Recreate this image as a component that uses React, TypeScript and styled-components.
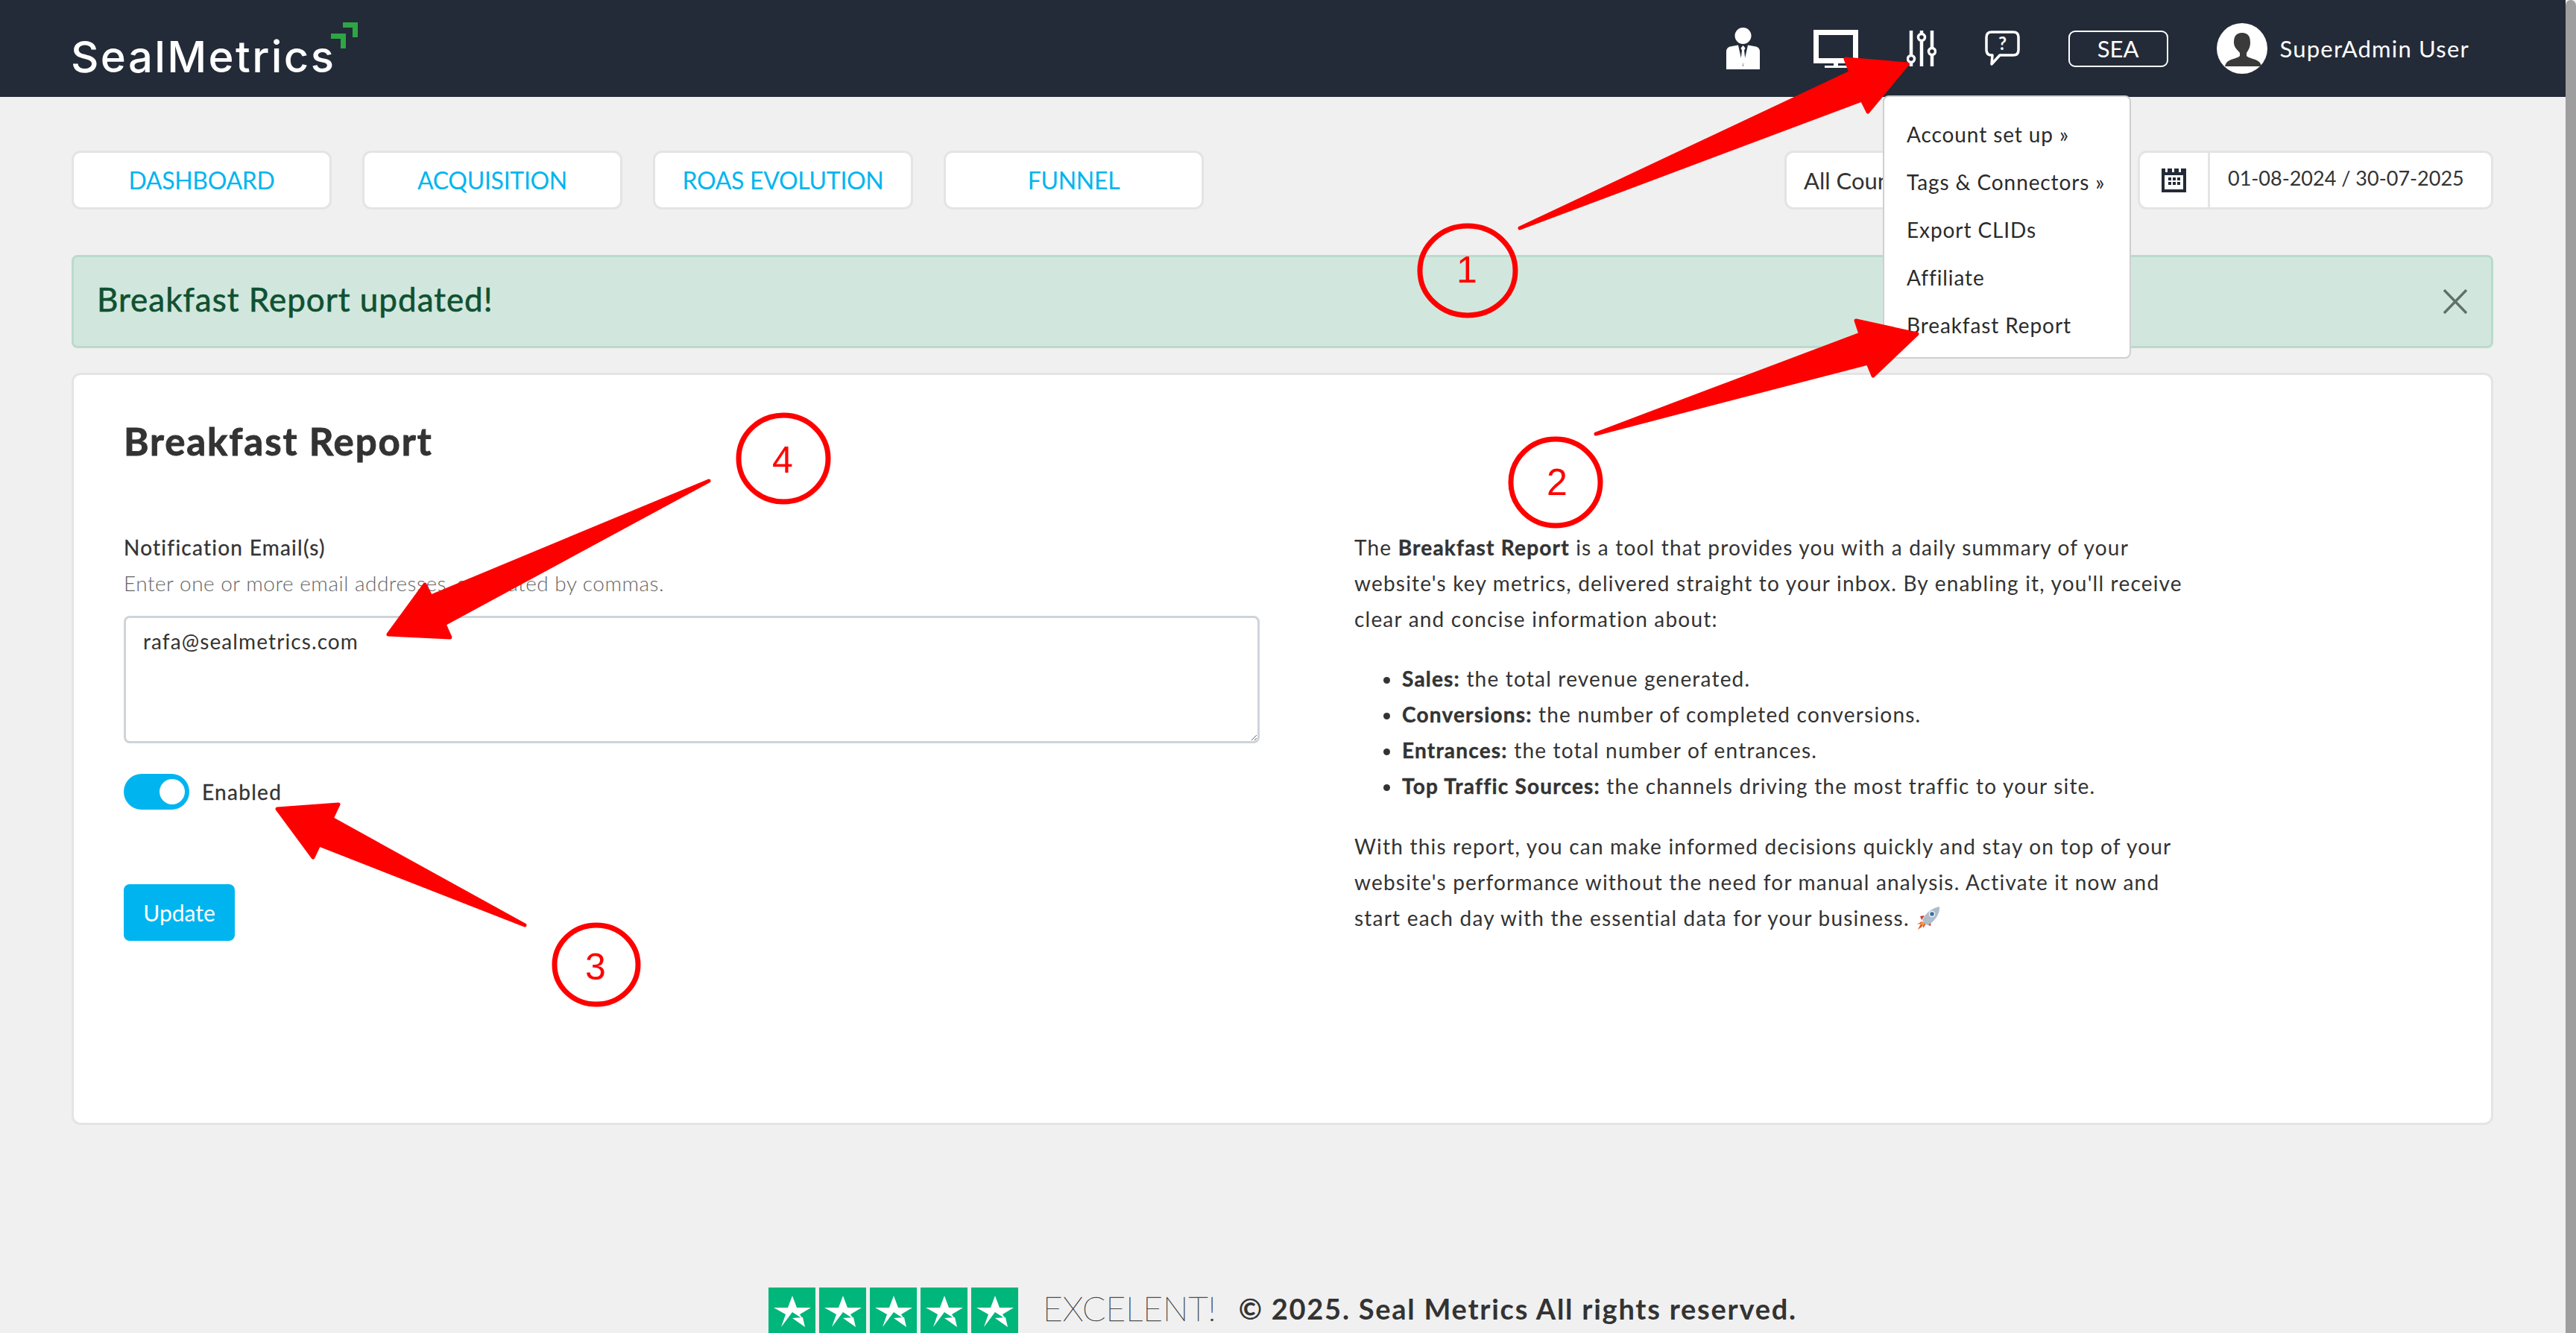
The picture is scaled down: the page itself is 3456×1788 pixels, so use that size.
import styled, { createGlobalStyle } from 'styled-components'

const CYAN = '#00b5ef'
const NAVY = '#232b38'
const TEXT = '#333333'
const LINE = '#e4e4e4'

const GlobalStyle = createGlobalStyle`
  html, body { margin: 0; padding: 0; background: #f0f0f0; overflow: hidden; }
  * { box-sizing: border-box; }
  body { font-family: 'Lato', 'Noto Sans', sans-serif; color: ${TEXT}; }
`

const TABS = ['DASHBOARD', 'ACQUISITION', 'ROAS EVOLUTION', 'FUNNEL']
const MENU = ['Account set up »', 'Tags & Connectors »', 'Export CLIDs', 'Affiliate', 'Breakfast Report']

function SuitIcon() {
  return (
    <SuitSvg width="45" height="56" viewBox="0 0 45 56">
      <circle cx="22.5" cy="11" r="11" fill="#fff" />
      <path d="M0 56V32q0-5 5-6.500l11-2 6.500 29 6.500-29 11 2q5 1.500 5 6.500v24z" fill="#fff" />
      <path d="M22.500 24l3 3.500-1.500 3 1.500 13-3 7-3-7 1.500-13-1.500-3z" fill="#fff" />
    </SuitSvg>
  )
}

function MonitorIcon() {
  return (
    <svg width="60" height="51" viewBox="0 0 60 51">
      <rect x="3.500" y="3.500" width="53" height="38" fill="none" stroke="#fff" strokeWidth="7" />
      <rect x="27" y="45" width="6" height="3" fill="#fff" />
      <rect x="15" y="48" width="30" height="3" fill="#fff" />
    </svg>
  )
}

function SlidersIcon() {
  return (
    <svg width="40" height="48" viewBox="0 0 40 48" fill={NAVY} stroke="#fff">
      <path d="M6 0v48M20 0v48M34 0v48" strokeWidth="4.500" strokeLinecap="round" />
      <circle cx="6" cy="38" r="4.500" strokeWidth="3.500" />
      <circle cx="20" cy="9" r="4.500" strokeWidth="3.500" />
      <circle cx="34" cy="28" r="4.500" strokeWidth="3.500" />
    </svg>
  )
}

function ChatIcon() {
  return (
    <svg width="47" height="48" viewBox="0 0 47 48">
      <path
        d="M9 2h29q7 0 7 7v17q0 7-7 7H20L9 45l1-12H9q-7 0-7-7V9q0-7 7-7z"
        fill="none"
        stroke="#fff"
        strokeWidth="3.500"
        strokeLinejoin="round"
      />
      <text x="23.500" y="26" textAnchor="middle" fontFamily="Lato, sans-serif" fontWeight="700" fontSize="24" fill="#fff">?</text>
    </svg>
  )
}

function AvatarIcon() {
  return (
    <svg width="68" height="68" viewBox="0 0 68 68">
      <circle cx="34" cy="34" r="34" fill="#fff" />
      <path
        d="M34 13c8 0 11 5 11 13 0 7-3 11-5 14v4c2 3 13 4 17 8 2 2 3 5 3 6H11c0-1 1-4 3-6 4-4 15-5 17-8v-4c-2-3-8-7-8-14 0-8 3-13 11-13z"
        fill="#3a3a3a"
      />
    </svg>
  )
}

function CalendarIcon() {
  return (
    <svg width="33" height="32" viewBox="0 0 33 32">
      <path d="M0 0h5v5h3V0h6v5h3V0h6v5h3V0h7v32H0z" fill={NAVY} />
      <rect x="4" y="9" width="25" height="19" fill="#fff" />
      <path d="M9 12h4v4H9zM15 12h4v4h-4zM21 12h4v4h-4zM9 18h4v4H9zM15 18h4v4h-4zM21 18h4v4h-4z" fill={NAVY} />
    </svg>
  )
}

function TrustStar() {
  return (
    <StarBox>
      <svg width="52" height="42" viewBox="0 0 52 42">
        <path d="M26 0l6 16h19L36 25l4 6-14-9-15 20 6-17L1 16h19z" fill="#fff" />
        <path d="M26 30l14-1 3 13z" fill="#fff" />
      </svg>
    </StarBox>
  )
}

function Rocket() {
  return (
    <RocketSvg width="34" height="32" viewBox="0 0 34 32">
      <path d="M8 20l-6 4 5-1-4 8 7-5 0 3 4-6z" fill="#e8502a" />
      <path d="M8 21l-2 3 3-1-1 4 4-4z" fill="#f7b52c" />
      <path d="M6 13l6-1-4 6zM20 26l1-7-6 5z" fill="#d2362a" />
      <path d="M12 23L9 18C14 8 22 2 32 0c1 9-5 18-15 25z" fill="#aebdca" />
      <circle cx="22" cy="10" r="3.500" fill="#3b6f9e" stroke="#eef3f6" strokeWidth="1.500" />
    </RocketSvg>
  )
}

function Annotations() {
  const arrows = [
    '2039,306 2483,97 2476,79 2559,86 2506,150 2498,134',
    '2141,582 2496,448 2490,430 2572,448 2513,504 2506,487',
    '704,1241 445,1098 454,1079 372,1085 420,1150 428,1133',
    '951,645 578,800 570,784 521,851 604,855 596,837',
  ]
  const badges = [
    { n: '1', cx: 1969, cy: 363, rx: 64, ry: 60, x: 1968, y: 379 },
    { n: '2', cx: 2087, cy: 647, rx: 60, ry: 58, x: 2089, y: 664 },
    { n: '3', cx: 800, cy: 1294, rx: 56, ry: 53, x: 799, y: 1314 },
    { n: '4', cx: 1051, cy: 615, rx: 60, ry: 58, x: 1050, y: 634 },
  ]
  return (
    <Overlay viewBox="0 0 3456 1788" width="3456" height="1788">
      {arrows.map(points => (
        <polygon key={points} points={points} fill="#ff0000" stroke="#ff0000" strokeWidth="5" strokeLinejoin="round" />
      ))}
      {badges.map(b => (
        <g key={b.n}>
          <ellipse cx={b.cx} cy={b.cy} rx={b.rx} ry={b.ry} fill="none" stroke="#ff0000" strokeWidth="7" />
          <text x={b.x} y={b.y} textAnchor="middle" fontFamily="'Liberation Sans', sans-serif" fontSize="50" fill="#ff0000">{b.n}</text>
        </g>
      ))}
    </Overlay>
  )
}

export default function App() {
  return (
    <Page>
      <GlobalStyle />
      <Column>
        <Header>
          <Logo>
            SealMetrics
            <LogoMark width="36" height="35" viewBox="0 0 36 35">
              <path d="M16 0h20v20h-7V7H16zM0 15h20v20h-7V22H0z" fill="#2ea644" />
            </LogoMark>
          </Logo>
          <HeaderRight>
            <SuitIcon />
            <MonitorIcon />
            <SlidersIcon />
            <ChatIcon />
            <RegionBadge>SEA</RegionBadge>
            <UserBlock>
              <AvatarIcon />
              <UserName>SuperAdmin User</UserName>
            </UserBlock>
          </HeaderRight>
        </Header>

        <Main>
          <Toolbar>
            <Tabs>
              {TABS.map(t => (
                <Tab key={t}>{t}</Tab>
              ))}
            </Tabs>
            <Filters>
              <CountrySelect>All Countries</CountrySelect>
              <DateBox>
                <DateIcon>
                  <CalendarIcon />
                </DateIcon>
                <DateValue>01-08-2024 / 30-07-2025</DateValue>
              </DateBox>
            </Filters>
          </Toolbar>

          <Alert>
            <AlertText>Breakfast Report updated!</AlertText>
            <svg width="32" height="33" viewBox="0 0 32 33">
              <path d="M1 1l30 31M31 1L1 32" stroke="#5f7069" strokeWidth="3.500" fill="none" />
            </svg>
          </Alert>

          <Card>
            <CardTitle>Breakfast Report</CardTitle>
            <CardGrid>
              <div>
                <FieldLabel>Notification Email(s)</FieldLabel>
                <FieldHelp>Enter one or more email addresses, separated by commas.</FieldHelp>
                <EmailInput defaultValue="rafa@sealmetrics.com" readOnly />
                <SwitchRow>
                  <SwitchTrack>
                    <SwitchKnob />
                  </SwitchTrack>
                  <SwitchLabel>Enabled</SwitchLabel>
                </SwitchRow>
                <UpdateButton type="button">Update</UpdateButton>
              </div>
              <Copy>
                <CopyText>
                  The <b>Breakfast Report</b> is a tool that provides you with a daily summary of your
                  <br />
                  website's key metrics, delivered straight to your inbox. By enabling it, you'll receive
                  <br />
                  clear and concise information about:
                </CopyText>
                <CopyList>
                  <li><b>Sales:</b> the total revenue generated.</li>
                  <li><b>Conversions:</b> the number of completed conversions.</li>
                  <li><b>Entrances:</b> the total number of entrances.</li>
                  <li><b>Top Traffic Sources:</b> the channels driving the most traffic to your site.</li>
                </CopyList>
                <CopyText>
                  With this report, you can make informed decisions quickly and stay on top of your
                  <br />
                  website's performance without the need for manual analysis. Activate it now and
                  <br />
                  start each day with the essential data for your business. <Rocket />
                </CopyText>
              </Copy>
            </CardGrid>
          </Card>

          <Footer>
            <Stars>
              <TrustStar />
              <TrustStar />
              <TrustStar />
              <TrustStar />
              <TrustStar />
            </Stars>
            <Excellent>EXCELENT!</Excellent>
            <Rights>© 2025. Seal Metrics All rights reserved.</Rights>
          </Footer>
        </Main>
      </Column>
      <ScrollThumb />

      <DropMenu>
        {MENU.map(m => (
          <MenuItem key={m}>{m}</MenuItem>
        ))}
      </DropMenu>
      <Annotations />
    </Page>
  )
}

const Page = styled.div`
  position: relative;
  display: flex;
  width: 3456px;
  height: 1788px;
  overflow: hidden;
  background: #f0f0f0;
`

const Column = styled.div`
  width: 3442px;
  flex: none;
`

const ScrollThumb = styled.div`
  width: 14px;
  flex: none;
  background: #9e9e9e;
  border-radius: 7px 7px 0 0;
`

const Header = styled.header`
  height: 130px;
  background: ${NAVY};
  display: flex;
  align-items: center;
  justify-content: space-between;
  padding: 0 129px 0 95px;
`

const Logo = styled.div`
  position: relative;
  font-family: 'Inter', sans-serif;
  font-size: 58px;
  font-weight: 500;
  letter-spacing: 2.4px;
  line-height: 60px;
  color: #fff;
  margin-top: 22px;
`

const LogoMark = styled.svg`
  position: absolute;
  right: -30px;
  top: -16px;
`

const HeaderRight = styled.div`
  display: flex;
  align-items: center;
  gap: 65px;
`

const SuitSvg = styled.svg`
  margin-right: 7px;
`

const RegionBadge = styled.div`
  width: 134px;
  height: 49px;
  border: 2px solid #fff;
  border-radius: 9px;
  color: #fff;
  font-size: 31px;
  line-height: 45px;
  text-align: center;
`

const UserBlock = styled.div`
  display: flex;
  align-items: center;
  gap: 17px;
`

const UserName = styled.span`
  color: #fff;
  font-size: 31px;
  letter-spacing: 1.2px;
  white-space: nowrap;
`

const Main = styled.main`
  padding: 72px 97px 0 96px;
`

const Toolbar = styled.div`
  display: flex;
  justify-content: space-between;
`

const Tabs = styled.nav`
  display: flex;
  gap: 41px;
`

const Tab = styled.a`
  width: 349px;
  height: 79px;
  display: flex;
  align-items: center;
  justify-content: center;
  background: #fff;
  border: 3px solid ${LINE};
  border-radius: 12px;
  color: ${CYAN};
  font-size: 32px;
  letter-spacing: -0.3px;
`

const Filters = styled.div`
  display: flex;
  gap: 20px;
`

const CountrySelect = styled.div`
  width: 454px;
  height: 79px;
  padding-left: 23px;
  display: flex;
  align-items: center;
  background: #fff;
  border: 3px solid ${LINE};
  border-radius: 12px;
  font-size: 31px;
`

const DateBox = styled.div`
  width: 477px;
  height: 79px;
  display: flex;
  background: #fff;
  border: 3px solid ${LINE};
  border-radius: 12px;
`

const DateIcon = styled.div`
  width: 94px;
  display: flex;
  align-items: center;
  justify-content: center;
  border-right: 3px solid ${LINE};
`

const DateValue = styled.div`
  padding: 0 0 6px 24px;
  display: flex;
  align-items: center;
  font-size: 27px;
  white-space: nowrap;
`

const Alert = styled.div`
  margin-top: 61px;
  height: 125px;
  display: flex;
  align-items: center;
  justify-content: space-between;
  padding: 0 32px 0 31px;
  background: #d1e7dd;
  border: 3px solid #badbcc;
  border-radius: 8px;
`

const AlertText = styled.div`
  margin-bottom: 8px;
  color: #0f5132;
  font-size: 44px;
  letter-spacing: 1px;
  -webkit-text-stroke: 0.6px #0f5132;
`

const Card = styled.section`
  margin-top: 33px;
  height: 1009px;
  padding: 59px 66px 0 67px;
  background: #fff;
  border: 3px solid ${LINE};
  border-radius: 12px;
`

const CardTitle = styled.h2`
  margin: 0 0 88px;
  font-size: 51px;
  line-height: 60px;
  font-weight: 700;
  letter-spacing: 1.9px;
  -webkit-text-stroke: 0.9px ${TEXT};
  color: ${TEXT};
`

const CardGrid = styled.div`
  display: grid;
  grid-template-columns: 1524px 1fr;
  column-gap: 127px;
`

const FieldLabel = styled.div`
  font-size: 28px;
  line-height: 48px;
  letter-spacing: 1.25px;
  -webkit-text-stroke: 0.3px ${TEXT};
`

const FieldHelp = styled.div`
  font-size: 28px;
  line-height: 48px;
  font-weight: 300;
  letter-spacing: 0.5px;
  color: #666;
`

const EmailInput = styled.textarea`
  display: block;
  width: 100%;
  height: 171px;
  margin-top: 20px;
  padding: 11px 23px;
  background: #fff;
  border: 3px solid #ced4da;
  border-radius: 8px;
  outline: none;
  font-family: inherit;
  font-size: 28px;
  line-height: 40px;
  letter-spacing: 1.1px;
  color: ${TEXT};
  resize: vertical;
`

const SwitchRow = styled.div`
  margin-top: 41px;
  display: flex;
  align-items: center;
  gap: 17px;
`

const SwitchTrack = styled.div`
  position: relative;
  width: 88px;
  height: 48px;
  border-radius: 24px;
  background: ${CYAN};
`

const SwitchKnob = styled.span`
  position: absolute;
  right: 6px;
  top: 7px;
  width: 34px;
  height: 34px;
  border-radius: 50%;
  background: #fff;
`

const SwitchLabel = styled.span`
  font-size: 28px;
  letter-spacing: 1.3px;
  -webkit-text-stroke: 0.3px ${TEXT};
`

const UpdateButton = styled.button`
  display: block;
  width: 149px;
  height: 76px;
  margin-top: 100px;
  border: 0;
  border-radius: 8px;
  background: ${CYAN};
  color: #fff;
  font-family: inherit;
  font-size: 30px;
`

const Copy = styled.div`
  font-size: 28px;
  line-height: 48px;
  letter-spacing: 1.2px;

  b {
    -webkit-text-stroke: 0.4px ${TEXT};
  }
`

const CopyText = styled.p`
  margin: 0;
  white-space: nowrap;
`

const CopyList = styled.ul`
  margin: 32px 0 33px;
  padding: 0 0 0 64px;
  white-space: nowrap;
`

const RocketSvg = styled.svg`
  vertical-align: -6px;
`

const Footer = styled.footer`
  margin-top: 218px;
  margin-left: 935px;
  display: flex;
  align-items: flex-start;
`

const Stars = styled.div`
  display: flex;
  gap: 5px;
`

const StarBox = styled.div`
  width: 63px;
  height: 63px;
  padding-top: 11px;
  display: flex;
  justify-content: center;
  align-items: flex-start;
  background: #00b67a;
`

const Excellent = styled.div`
  margin-left: 33px;
  font-size: 46px;
  line-height: 56px;
  font-weight: 100;
  color: #333;
  -webkit-text-stroke: 0.5px #444;
`

const Rights = styled.div`
  margin-left: 30px;
  font-size: 38px;
  line-height: 56px;
  font-weight: 700;
  letter-spacing: 1.75px;
  color: ${TEXT};
  white-space: nowrap;
`

const DropMenu = styled.div`
  position: absolute;
  top: 128px;
  left: 2526px;
  width: 333px;
  height: 353px;
  padding: 18px 30px;
  background: #fff;
  border: 2px solid #cfcfcf;
  border-radius: 8px;
`

const MenuItem = styled.div`
  height: 64px;
  font-size: 28px;
  line-height: 64px;
  letter-spacing: 0.9px;
  white-space: nowrap;
  color: #2b2b2b;
`

const Overlay = styled.svg`
  position: absolute;
  left: 0;
  top: 0;
  pointer-events: none;
`
